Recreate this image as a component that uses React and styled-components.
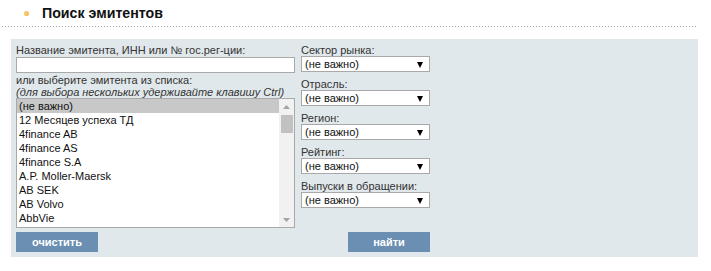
import React from "react";
import styled, { createGlobalStyle } from "styled-components";

const GlobalStyle = createGlobalStyle`
  html, body {
    margin: 0;
    padding: 0;
    background: #fff;
  }
  body {
    font-family: "Liberation Sans", Arial, sans-serif;
  }
`;

const issuers = [
  "(не важно)",
  "12 Месяцев успеха ТД",
  "4finance AB",
  "4finance AS",
  "4finance S.A",
  "A.P. Moller-Maersk",
  "AB SEK",
  "AB Volvo",
  "AbbVie",
];

const filters = [
  "Сектор рынка:",
  "Отрасль:",
  "Регион:",
  "Рейтинг:",
  "Выпуски в обращении:",
];

const Page = styled.div`
  width: 711px;
`;

const Header = styled.div`
  padding-top: 5px;
`;

const TitleRow = styled.div`
  display: flex;
  align-items: center;
  gap: 13px;
  padding-left: 24px;
  height: 17px;
`;

const Bullet = styled.span`
  width: 5px;
  height: 5px;
  border-radius: 50%;
  background: radial-gradient(circle at 40% 40%, #fbd27a, #eea93a);
`;

const Title = styled.h1`
  margin: 0;
  font-size: 14.2px;
  line-height: 17px;
  font-weight: bold;
  color: #111;
`;

const Dotted = styled.div`
  margin: 4px 0 0 2px;
  width: 694px;
  height: 1px;
  background-image: linear-gradient(to right, #a8a8a8 1px, transparent 1px);
  background-size: 3px 1px;
`;

const Panel = styled.form`
  margin: 12px 0 0 11px;
  width: 687px;
  box-sizing: border-box;
  padding: 5px 0 5px 5px;
  background: #e1e8eb;
  color: #333;
  font-size: 11px;
`;

const Columns = styled.div`
  display: flex;
  align-items: flex-start;
  gap: 6px;
`;

const LeftCol = styled.div`
  width: 279px;
  display: flex;
  flex-direction: column;
`;

const RightCol = styled.div`
  width: 129px;
  display: flex;
  flex-direction: column;
  gap: 6px;
`;

const Label = styled.label`
  display: block;
  line-height: ${(p) => p.$lh || 12}px;
  margin-top: ${(p) => p.$mt || 0}px;
  font-style: ${(p) => (p.$italic ? "italic" : "normal")};
  white-space: nowrap;
`;

const TextInput = styled.input`
  box-sizing: border-box;
  width: 279px;
  height: 16px;
  margin: 0;
  padding: 0 3px;
  border: 1px solid #a9a9a9;
  background: #fff;
  font: 11px "Liberation Sans", Arial, sans-serif;
  outline: none;
`;

const ListBox = styled.div`
  box-sizing: border-box;
  width: 279px;
  height: 130px;
  border: 1px solid #a9a9a9;
  background: #fff;
  display: flex;
`;

const Options = styled.ul`
  flex: 1;
  margin: 0;
  padding: 0;
  list-style: none;
  overflow: hidden;
`;

const Option = styled.li`
  height: 14px;
  line-height: 14px;
  padding-left: 2px;
  color: #111;
  background: ${(p) => (p.$selected ? "#c8c8c8" : "transparent")};
  white-space: nowrap;
`;

const ScrollTrack = styled.div`
  width: 15px;
  background: #f1f1f1;
  display: flex;
  flex-direction: column;
  align-items: center;
`;

const ScrollArrow = styled.div`
  height: 15px;
  width: 15px;
  display: flex;
  align-items: center;
  justify-content: center;
`;

const Thumb = styled.div`
  width: 12px;
  height: 18px;
  background: #c1c1c1;
  margin-top: 1px;
`;

const Spacer = styled.div`
  flex: 1;
`;

const Field = styled.div`
  display: flex;
  flex-direction: column;
`;

const SelectWrap = styled.div`
  position: relative;
  width: 129px;
  height: 16px;

  &::after {
    content: "";
    position: absolute;
    right: 7px;
    top: 6px;
    border-left: 3.5px solid transparent;
    border-right: 3.5px solid transparent;
    border-top: 6px solid #000;
    pointer-events: none;
  }
`;

const Select = styled.select`
  appearance: none;
  box-sizing: border-box;
  width: 129px;
  height: 16px;
  margin: 0;
  padding: 0 0 0 3px;
  border: 1px solid #a9a9a9;
  border-radius: 0;
  background: #fff;
  color: #111;
  font: 11px "Liberation Sans", Arial, sans-serif;
  outline: none;
`;

const Buttons = styled.div`
  width: 414px;
  margin-top: 4px;
  display: flex;
  justify-content: space-between;
`;

const Button = styled.button`
  width: 82px;
  height: 20px;
  margin: 0;
  padding: 0;
  border: none;
  background: #6a8fb3;
  color: #fff;
  font: bold 11px "Liberation Sans", Arial, sans-serif;
  cursor: pointer;
`;

const Triangle = ({ up }) => (
  <svg width="7" height="4" viewBox="0 0 7 4">
    <polygon points={up ? "0,4 7,4 3.5,0" : "0,0 7,0 3.5,4"} fill="#a3a3a3" />
  </svg>
);

export default function App() {
  return (
    <Page>
      <GlobalStyle />
      <Header>
        <TitleRow>
          <Bullet />
          <Title>Поиск эмитентов</Title>
        </TitleRow>
        <Dotted />
      </Header>
      <Panel onSubmit={(e) => e.preventDefault()}>
        <Columns>
          <LeftCol>
            <Label $lh={13}>Название эмитента, ИНН или № гос.рег-ции:</Label>
            <TextInput type="text" />
            <Label $mt={1}>или выберите эмитента из списка:</Label>
            <Label $italic>(для выбора нескольких удерживайте клавишу Ctrl)</Label>
            <ListBox>
              <Options>
                {issuers.map((name, i) => (
                  <Option key={name} $selected={i === 0}>
                    {name}
                  </Option>
                ))}
              </Options>
              <ScrollTrack>
                <ScrollArrow>
                  <Triangle up />
                </ScrollArrow>
                <Thumb />
                <Spacer />
                <ScrollArrow>
                  <Triangle />
                </ScrollArrow>
              </ScrollTrack>
            </ListBox>
          </LeftCol>
          <RightCol>
            {filters.map((f) => (
              <Field key={f}>
                <Label>{f}</Label>
                <SelectWrap>
                  <Select defaultValue="">
                    <option value="">(не важно)</option>
                  </Select>
                </SelectWrap>
              </Field>
            ))}
          </RightCol>
        </Columns>
        <Buttons>
          <Button type="button">очистить</Button>
          <Button type="submit">найти</Button>
        </Buttons>
      </Panel>
    </Page>
  );
}
